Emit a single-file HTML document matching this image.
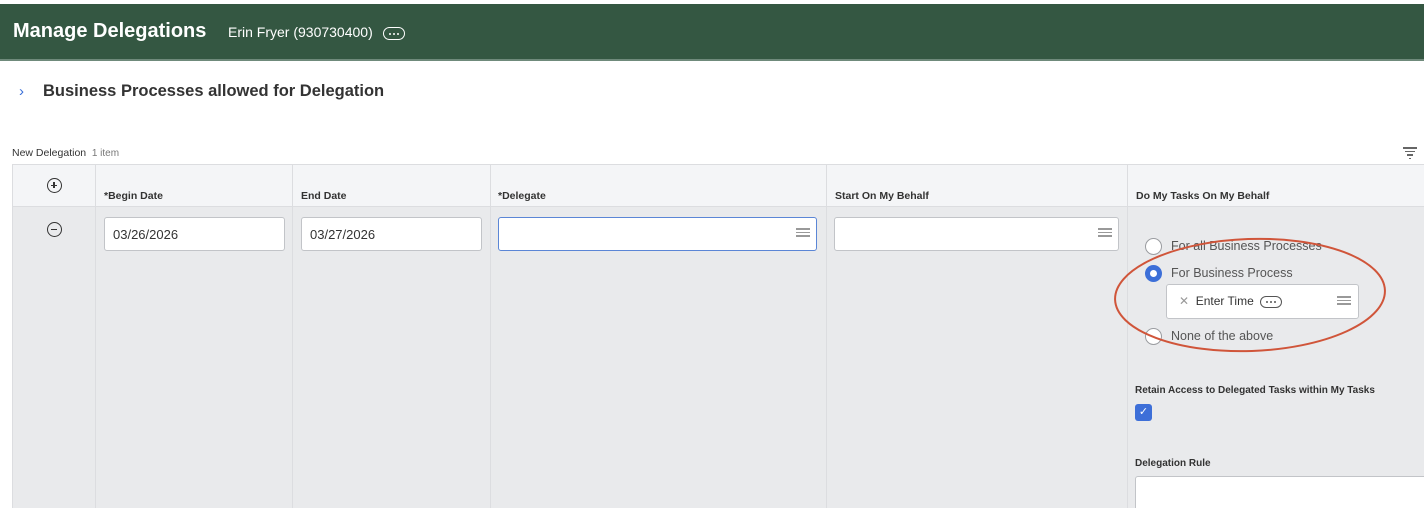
<!DOCTYPE html>
<html><head><style>
*{box-sizing:border-box;margin:0;padding:0}
html,body{width:1424px;height:508px;overflow:hidden}
body{background:#fff;font-family:"Liberation Sans",sans-serif;color:#333;position:relative}
.abs{position:absolute}
.hdr{left:0;top:4px;width:1424px;height:57px;background:#345742;border-bottom:2px solid #6f8a7b}
.inp{position:absolute;background:#fff;border:1px solid #c2c4c8;border-radius:3px;height:34px;font-size:13px;padding:9px 8px;color:#333}
.th{font-size:10.5px;font-weight:bold;color:#333;top:190px}
.vl{position:absolute;top:164px;width:1px;height:344px;background:#dcdde0}
.radio{position:absolute;left:1145px;width:17px;height:17px;border-radius:50%;border:1px solid #9a9ca0;background:#fff}
.lbl{position:absolute;left:1171px;font-size:12.5px;color:#555}
.lines{position:absolute;width:14px}
.lines i{display:block;height:1.5px;background:#999;margin:2px 0}
.dots{display:inline-block;border-radius:8px;text-align:center;vertical-align:middle;position:relative}
.dots b{position:absolute;top:50%;width:2px;height:2px;margin-top:-1px;border-radius:50%}
</style></head><body>
<div class="abs hdr"></div>
<div class="abs" style="left:13px;top:20px;font-size:20px;font-weight:bold;color:#fff">Manage Delegations</div>
<div class="abs" style="left:228px;top:24px;font-size:14px;color:#fff">Erin Fryer (930730400)</div>
<div class="abs dots" style="left:383px;top:25px;width:22px;height:13px;border:1.5px solid #fff"><b style="left:5px;background:#fff"></b><b style="left:9px;background:#fff"></b><b style="left:13px;background:#fff"></b></div>
<div class="abs" style="left:19px;top:83px;font-size:15px;color:#3a6fd8">›</div>
<div class="abs" style="left:43px;top:82px;font-size:16.5px;font-weight:bold;color:#333">Business Processes allowed for Delegation</div>
<div class="abs" style="left:12px;top:147px;font-size:10.5px;color:#333">New Delegation <span style="color:#777;font-size:10px">&nbsp;1 item</span></div>
<div class="abs" style="left:1403px;top:145px;width:14px"><div style="height:1.5px;background:#666;margin:2px 0"></div><div style="height:1.5px;background:#666;margin:2px 2px"></div><div style="height:1.5px;background:#666;margin:2px 4px"></div><div style="height:1.5px;background:#666;margin:2px 6px"></div></div>
<div class="abs" style="left:12px;top:164px;width:1412px;height:43px;background:#f4f5f7;border-top:1px solid #dcdde0;border-bottom:1px solid #dcdde0"></div>
<div class="abs" style="left:12px;top:207px;width:1412px;height:301px;background:#e9eaec"></div>
<div class="vl" style="left:12px"></div><div class="vl" style="left:95px"></div><div class="vl" style="left:292px"></div><div class="vl" style="left:490px"></div><div class="vl" style="left:826px"></div><div class="vl" style="left:1127px"></div>
<div class="abs" style="left:47px;top:178px;width:15px;height:15px;border:1.5px solid #333;border-radius:50%"><div style="position:absolute;left:3px;top:5.5px;width:6px;height:1.5px;background:#333"></div><div style="position:absolute;left:5.25px;top:3px;width:1.5px;height:6px;background:#333"></div></div>
<div class="abs" style="left:47px;top:222px;width:15px;height:15px;border:1.5px solid #333;border-radius:50%"><div style="position:absolute;left:3px;top:5.5px;width:6px;height:1.5px;background:#333"></div></div>
<div class="abs th" style="left:104px">*Begin Date</div>
<div class="abs th" style="left:301px">End Date</div>
<div class="abs th" style="left:498px">*Delegate</div>
<div class="abs th" style="left:835px">Start On My Behalf</div>
<div class="abs th" style="left:1136px">Do My Tasks On My Behalf</div>
<div class="inp" style="left:104px;top:217px;width:181px">03/26/2026</div>
<div class="inp" style="left:301px;top:217px;width:181px">03/27/2026</div>
<div class="inp" style="left:498px;top:217px;width:319px;border:1.5px solid #5b86d6"></div>
<div class="lines" style="left:796px;top:226px"><i></i><i></i><i></i></div>
<div class="inp" style="left:834px;top:217px;width:285px"></div>
<div class="lines" style="left:1098px;top:226px"><i></i><i></i><i></i></div>
<div class="radio" style="top:238px"></div><div class="lbl" style="top:239px">For all Business Processes</div>
<div class="radio" style="top:265px;border:5px solid #3c6fd8"></div><div class="lbl" style="top:266px">For Business Process</div>
<div class="inp" style="left:1166px;top:284px;width:193px;height:35px;font-size:12px;padding:9px 12px;color:#333"><span style="color:#999">✕</span>&nbsp; Enter Time <span class="dots" style="width:22px;height:12px;border:1.2px solid #555;margin-left:3px"><b style="left:5px;background:#555"></b><b style="left:9px;background:#555"></b><b style="left:13px;background:#555"></b></span></div>
<div class="lines" style="left:1337px;top:294px"><i></i><i></i><i></i></div>
<div class="radio" style="top:328px"></div><div class="lbl" style="top:329px">None of the above</div>
<svg class="abs" style="left:0;top:0" width="1424" height="508"><ellipse cx="1250" cy="295" rx="135" ry="56" fill="none" stroke="#d0553a" stroke-width="2" transform="rotate(-2 1250 295)"/></svg>
<div class="abs" style="left:1135px;top:385px;font-size:10px;font-weight:bold;color:#333">Retain Access to Delegated Tasks within My Tasks</div>
<div class="abs" style="left:1135px;top:404px;width:17px;height:17px;background:#3d6fd8;border-radius:3px;color:#fff;font-size:11px;text-align:center;line-height:17px">✓</div>
<div class="abs" style="left:1135px;top:458px;font-size:10px;font-weight:bold;color:#333">Delegation Rule</div>
<div class="abs" style="left:1135px;top:476px;width:300px;height:40px;background:#fff;border:1px solid #c2c4c8;border-radius:3px"></div>
</body></html>
